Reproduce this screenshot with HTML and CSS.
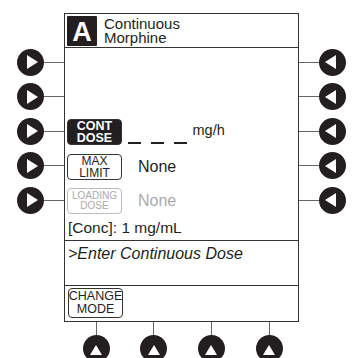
FILE: index.html
```html
<!DOCTYPE html>
<html lang="en">
<head>
  <meta charset="UTF-8" />
  <meta name="viewport" content="width=device-width, initial-scale=1.0"/>
  <title>Pump Channel A</title>
  <link rel="stylesheet" href="styles.css">
</head>
<body>
  <div class="device">
    <div class="keys keys-left">
      <div class="key"><span class="knob"><i class="arrow arrow-right"></i></span><span class="wire"></span></div>
      <div class="key"><span class="knob"><i class="arrow arrow-right"></i></span><span class="wire"></span></div>
      <div class="key"><span class="knob"><i class="arrow arrow-right"></i></span><span class="wire"></span></div>
      <div class="key"><span class="knob"><i class="arrow arrow-right"></i></span><span class="wire"></span></div>
      <div class="key"><span class="knob"><i class="arrow arrow-right"></i></span><span class="wire"></span></div>
    </div>

    <div class="screen">
      <div class="screen-head">
        <span class="channel">A</span>
        <div class="title">Continuous<br>Morphine</div>
      </div>

      <div class="screen-body">
        <div class="row"></div>
        <div class="row"></div>
        <div class="row">
          <span class="softkey softkey-on">CONT<br>DOSE</span>
          <span class="blanks"><i></i><i></i><i></i></span>
          <span class="unit">mg/h</span>
        </div>
        <div class="row">
          <span class="softkey">MAX<br>LIMIT</span>
          <span class="value">None</span>
        </div>
        <div class="row row-off">
          <span class="softkey softkey-off">LOADING<br>DOSE</span>
          <span class="value">None</span>
        </div>
        <div class="conc">[Conc]: 1 mg/mL</div>
      </div>

      <div class="prompt">&gt;Enter Continuous Dose</div>

      <div class="screen-foot">
        <span class="softkey softkey-tall">CHANGE<br>MODE</span>
      </div>
    </div>

    <div class="keys keys-right">
      <div class="key"><span class="wire"></span><span class="knob"><i class="arrow arrow-left"></i></span></div>
      <div class="key"><span class="wire"></span><span class="knob"><i class="arrow arrow-left"></i></span></div>
      <div class="key"><span class="wire"></span><span class="knob"><i class="arrow arrow-left"></i></span></div>
      <div class="key"><span class="wire"></span><span class="knob"><i class="arrow arrow-left"></i></span></div>
      <div class="key"><span class="wire"></span><span class="knob"><i class="arrow arrow-left"></i></span></div>
    </div>

    <div class="keys-bottom">
      <div class="key-down"><span class="wire"></span><span class="knob"><i class="arrow arrow-up"></i></span></div>
      <div class="key-down"><span class="wire"></span><span class="knob"><i class="arrow arrow-up"></i></span></div>
      <div class="key-down"><span class="wire"></span><span class="knob"><i class="arrow arrow-up"></i></span></div>
      <div class="key-down"><span class="wire"></span><span class="knob"><i class="arrow arrow-up"></i></span></div>
    </div>
  </div>
</body>
</html>
```

FILE: styles.css
```css
body {
  margin: 0;
  font-family: "Liberation Sans", Arial, sans-serif;
  background: #fff;
  color: #231f20;
  overflow: hidden;
}

.device {
  display: grid;
  grid-template-columns: 64px 235px 1fr;
  padding-top: 13px;
}

/* side keys */
.keys {
  display: flex;
  flex-direction: column;
  gap: 7.6px;
  padding-top: 35.5px;
}

.key {
  display: flex;
  align-items: center;
  height: 27px;
}

.keys-left .knob {
  margin-left: 17px;
}

.keys-right .key {
  padding-right: 7.5px;
}

.wire {
  flex: 1;
  height: 1px;
  background: #666;
}

.knob {
  width: 27px;
  height: 27px;
  flex: none;
  border-radius: 50%;
  background: #231f20;
  display: flex;
  align-items: center;
  justify-content: center;
}

.arrow {
  width: 0;
  height: 0;
  border: 0 solid transparent;
}

.arrow-right {
  border-left: 11px solid #fff;
  border-top-width: 7px;
  border-bottom-width: 7px;
  margin-left: 4px;
}

.arrow-left {
  border-right: 11px solid #fff;
  border-top-width: 7px;
  border-bottom-width: 7px;
  margin-right: 4px;
}

.arrow-up {
  border-bottom: 10px solid #fff;
  border-left-width: 6.5px;
  border-right-width: 6.5px;
  margin-top: 2px;
}

/* screen */
.screen {
  box-sizing: border-box;
  width: 235px;
  height: 309px;
  border: 1px solid #333;
  display: flex;
  flex-direction: column;
}

.screen-head {
  height: 33px;
  border-bottom: 1px solid #333;
  display: flex;
  align-items: center;
  gap: 7px;
  padding-left: 2px;
}

.channel {
  width: 30px;
  height: 30px;
  background: #231f20;
  color: #fff;
  font-size: 27px;
  font-weight: bold;
  line-height: 32px;
  text-align: center;
  border-radius: 1px;
}

.title {
  font-size: 15px;
  line-height: 14px;
  padding-top: 1px;
}

.screen-body {
  height: 193px;
  box-sizing: border-box;
  border-bottom: 1px solid #333;
  display: flex;
  flex-direction: column;
  gap: 4.6px;
  padding-left: 2px;
}

.row {
  height: 30px;
  display: flex;
  align-items: center;
}

.softkey {
  box-sizing: border-box;
  width: 55px;
  height: 26px;
  border: 1.5px solid #333;
  border-radius: 4px;
  font-size: 12px;
  line-height: 12px;
  text-align: center;
  display: flex;
  align-items: center;
  justify-content: center;
}

.softkey-on {
  background: #231f20;
  color: #fff;
  font-weight: bold;
  font-size: 12.5px;
}

.softkey-off {
  border-color: #bbb;
  color: #aaa;
  font-size: 10px;
  line-height: 10.5px;
}

.softkey-tall {
  height: 30px;
  font-size: 12.5px;
  line-height: 13px;
}

.blanks {
  display: flex;
  gap: 10.5px;
  margin-left: 6px;
  align-self: flex-end;
  margin-bottom: 3px;
}

.blanks i {
  width: 12.5px;
  height: 2px;
  background: #231f20;
}

.unit {
  font-size: 14.5px;
  margin-left: 6px;
  margin-top: -4px;
}

.value {
  font-size: 16px;
  margin-left: 16px;
}

.row-off .value {
  color: #aaa;
}

.conc {
  font-size: 15.5px;
  margin-top: -2px;
  padding-left: 1px;
}

.prompt {
  height: 45px;
  box-sizing: border-box;
  border-bottom: 1px solid #333;
  padding: 3px 0 0 3px;
  font-size: 16px;
  font-style: italic;
  line-height: 20px;
}

.screen-foot {
  padding: 2px 0 0 3px;
}

/* bottom keys */
.keys-bottom {
  grid-column: 1 / -1;
  display: flex;
  gap: 30.7px;
  padding-left: 82.5px;
}

.key-down {
  display: flex;
  flex-direction: column;
  align-items: center;
}

.key-down .wire {
  flex: none;
  width: 1px;
  height: 13px;
}
```
